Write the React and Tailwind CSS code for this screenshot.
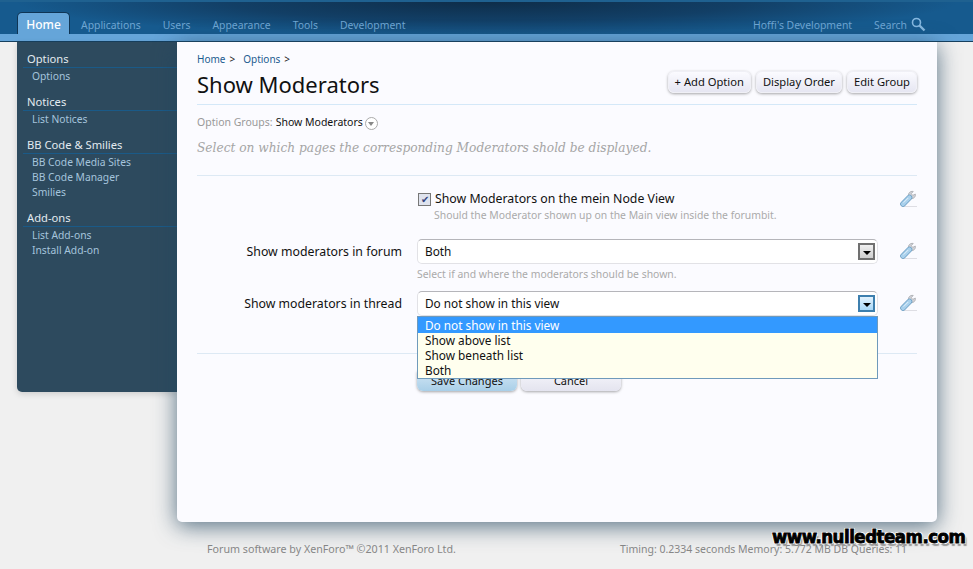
import React from "react";

const font = "font-['Noto_Sans',sans-serif]";

const navItems = ["Applications", "Users", "Appearance", "Tools", "Development"];

const sections = [
  { title: "Options", items: ["Options"] },
  { title: "Notices", items: ["List Notices"] },
  { title: "BB Code & Smilies", items: ["BB Code Media Sites", "BB Code Manager", "Smilies"] },
  { title: "Add-ons", items: ["List Add-ons", "Install Add-on"] },
];

const Wrench = () => (
  <svg width="17" height="17" viewBox="0 0 18 18" className="shrink-0">
    <path d="M3 17.500h15" stroke="#dcdce2" strokeWidth="1" />
    <path d="M9 6.500C8.400 3.500 10.500 1 14 1.500l-2 2.400 1.500 1.800 2.700-1.400c.6 3-1.700 5.300-4.700 4.700z" fill="#d2d3d8" stroke="#a5a7ac" strokeWidth=".8" />
    <path d="M3.200 14.800L10 8" stroke="#6d9fc4" strokeWidth="6" strokeLinecap="round" />
    <path d="M3.200 14.800L10 8" stroke="#a9d0ec" strokeWidth="4.400" strokeLinecap="round" />
    <path d="M3.800 13.400L8.800 8.400" stroke="#e6f2fa" strokeWidth="1" />
  </svg>
);

const Arrow = ({ active }) => (
  <span
    className={`flex h-[17px] w-[17px] items-center justify-center border-2 ${
      active
        ? "border-[#3d7fae] bg-gradient-to-b from-[#e2f2fd] to-[#a8d8f8]"
        : "border-[#707070] bg-gradient-to-b from-[#f0f0f0] to-[#cfcfcf]"
    }`}
  >
    <span className="mt-[2px] h-0 w-0 border-x-[4px] border-t-[4px] border-x-transparent border-t-black" />
  </span>
);

const Select = ({ value, active }) => (
  <div className="flex h-[25px] items-center justify-between rounded-[5px] border border-[#e2e2e6] border-t-[#b5b5ba] bg-white pl-[7px] pr-[2px] text-[11.800px] text-[#111]">
    {value}
    <Arrow active={active} />
  </div>
);

const App = () => {
  return (
    <div className={`relative h-[569px] w-[973px] overflow-hidden bg-[#f0f0f0] ${font}`}>
      <header className="h-[42px] border-b border-[#16405f] bg-[#65a5d9]">
        <div className="flex h-[34px] justify-between border-t-2 border-[#1f6190] bg-[radial-gradient(ellipse_470px_34px_at_50%_0%,#0e2d49_0%,#123f66_55%,#165a8e_100%)] pl-[17px] pr-[47px] text-[10.400px]">
          <nav className="flex items-end">
            <span className="flex h-[22px] w-[53px] items-center justify-center rounded-t-[5px] border-x border-t border-[#0f3555] bg-[#65a5d9] pt-[2px] text-[12px] font-medium text-white">
              Home
            </span>
            <div className="flex h-[22px] items-center gap-[22px] pl-[11px] pt-[5px] text-[#6fa6d3]">
              {navItems.map((item) => (
                <span key={item}>{item}</span>
              ))}
            </div>
          </nav>
          <div className="flex items-end">
            <div className="flex h-[22px] items-center pt-[5px] text-[#6fa6d3]">
              <span>Hoffi's Development</span>
              <span className="ml-[22px]">Search</span>
              <svg width="15" height="15" viewBox="0 0 15 15" className="mb-[3px] ml-[4px]">
                <circle cx="5.500" cy="5.500" r="4" fill="none" stroke="#86b8e0" strokeWidth="1.600" />
                <path d="M8.500 8.500L13.500 13.500" stroke="#86b8e0" strokeWidth="2.400" />
              </svg>
            </div>
          </div>
        </div>
      </header>

      <main className="flex pl-[17px]">
        <aside className="h-[350px] w-[160px] rounded-bl-[5px] bg-[#2d4a5e] pt-[8px] shadow-[0_2px_6px_rgba(0,0,0,0.15)]">
          {sections.map((section) => (
            <div key={section.title} className="mb-[9px]">
              <h3 className="ml-[6px] border-b border-[#1a5a88] pl-[4px] text-[11.200px] leading-[17px] text-[#e3ebf0]">
                {section.title}
              </h3>
              <ul className="pl-[15px] pt-[1px] text-[10.300px] leading-[15px] text-[#a5c4dc]">
                {section.items.map((item) => (
                  <li key={item}>{item}</li>
                ))}
              </ul>
            </div>
          ))}
        </aside>

        <section className="relative h-[480px] w-[760px] rounded-b-[5px] bg-[#fbfbff] px-[20px] pt-[11px] shadow-[0_4px_22px_rgba(35,70,95,0.75)]">
          <div className="flex h-[13px] items-center text-[10px] text-[#1b5c90]">
            <span>Home</span>
            <span className="ml-[4px] text-[#222]">&gt;</span>
            <span className="ml-[8px]">Options</span>
            <span className="ml-[4px] text-[#222]">&gt;</span>
          </div>

          <div className="flex h-[39px] items-center justify-between border-b border-[#d4e8f8]">
            <h1 className="-mt-[2px] text-[22px] leading-[34px] text-[#111]">Show Moderators</h1>
            <div className="-mt-[6px] flex gap-[5px]">
              {["+ Add Option", "Display Order", "Edit Group"].map((label) => (
                <button
                  key={label}
                  className="flex h-[22px] items-center rounded-[6px] border border-[#f0f0f6] bg-gradient-to-b from-[#fbfbff] to-[#e6e6f2] px-[6px] text-[11.200px] text-[#111] shadow-[0_1px_3px_rgba(0,0,0,0.35)]"
                >
                  {label}
                </button>
              ))}
            </div>
          </div>

          <div className="mt-[11px] flex h-[14px] items-center text-[10.500px] text-[#999]">
            Option Groups:
            <span className="ml-[3px] text-[#111]">Show Moderators</span>
            <span className="ml-[2px] flex h-[13px] w-[13px] items-center justify-center rounded-full border border-[#aaa] bg-white">
              <span className="mt-[2px] h-0 w-0 border-x-[3.500px] border-t-[4px] border-x-transparent border-t-[#888]" />
            </span>
          </div>

          <p className="mt-[10px] font-['DejaVu_Serif',serif] text-[12.200px] italic leading-[16px] text-[#a5a5a5]">
            Select on which pages the corresponding Moderators shold be displayed.
          </p>

          <div className="mt-[19px] border-t border-[#dde9f4] pt-[16px]">
            <div className="flex h-[40px]">
              <div className="ml-[220px] w-[461px]">
                <label className="flex items-center text-[12.300px] leading-[14px] text-[#111]">
                  <span className="ml-[1px] mr-[4px] flex h-[13px] w-[13px] items-center justify-center border border-[#777] bg-[#dfe3ee] text-[10px] leading-none text-[#33457f]">
                    ✔
                  </span>
                  Show Moderators on the mein Node View
                </label>
                <p className="mt-[2px] pl-[17px] text-[10.400px] leading-[14px] text-[#aaa]">
                  Should the Moderator shown up on the Main view inside the forumbit.
                </p>
              </div>
              <div className="ml-[22px] -mt-[2px]">
                <Wrench />
              </div>
            </div>

            <div className="mt-[7px] flex">
              <div className="w-[205px] pt-[5px] text-right text-[12.300px] leading-[16px] text-[#111]">
                Show moderators in forum
              </div>
              <div className="ml-[15px] w-[461px]">
                <Select value="Both" />
                <p className="mt-[3px] text-[10.400px] leading-[14px] text-[#aaa]">
                  Select if and where the moderators should be shown.
                </p>
              </div>
              <div className="ml-[22px] mt-[3px]">
                <Wrench />
              </div>
            </div>

            <div className="mt-[10px] flex">
              <div className="w-[205px] pt-[5px] text-right text-[12.300px] leading-[16px] text-[#111]">
                Show moderators in thread
              </div>
              <div className="relative ml-[15px] w-[461px]">
                <Select value="Do not show in this view" active />
                <ul className="absolute left-0 right-0 top-[25px] z-10 border border-[#6f9abb] bg-[#ffffee] text-[11.800px] leading-[15px] text-[#111]">
                  <li className="bg-[#3399ff] pl-[7px] pt-[1px] text-white">Do not show in this view</li>
                  <li className="pl-[7px]">Show above list</li>
                  <li className="pl-[7px]">Show beneath list</li>
                  <li className="pl-[7px]">Both</li>
                </ul>
              </div>
              <div className="ml-[22px] mt-[3px]">
                <Wrench />
              </div>
            </div>
          </div>

          <div className="mt-[37px] border-t border-[#dde9f4] pl-[220px] pt-[17px]">
            <div className="flex gap-[4px]">
              <button className="h-[20px] w-[100px] rounded-b-[6px] bg-gradient-to-b from-[#d2e6f4] to-[#a9cfe8] text-[11px] text-[#111] shadow-[0_1px_3px_rgba(0,0,0,0.35)]">
                Save Changes
              </button>
              <button className="h-[20px] w-[100px] rounded-b-[6px] bg-gradient-to-b from-[#f6f6fb] to-[#e4e4ef] text-[11px] text-[#111] shadow-[0_1px_3px_rgba(0,0,0,0.35)]">
                Cancel
              </button>
            </div>
          </div>
        </section>
      </main>

      <footer className="mt-[20px] flex pl-[207px] text-[10.700px] leading-[14px] text-[#888]">
        <span>Forum software by XenForo™ ©2011 XenForo Ltd.</span>
        <span className="ml-[164px] text-[10.500px]">Timing: 0.2334 seconds Memory: 5.772 MB DB Queries: 11</span>
      </footer>

      <div className="absolute left-[772px] top-[526px] font-['DejaVu_Sans',sans-serif] text-[18.500px] font-bold leading-[22px] tracking-[-0.5px] text-black [font-stretch:condensed] [-webkit-text-stroke:0.8px_black] [text-shadow:1px_1px_0_#fff,-1px_-1px_0_#fff,1px_-1px_0_#fff,-1px_1px_0_#fff,2px_3px_1px_#999]">
        www.nulledteam.com
      </div>
    </div>
  );
};

export default App;
